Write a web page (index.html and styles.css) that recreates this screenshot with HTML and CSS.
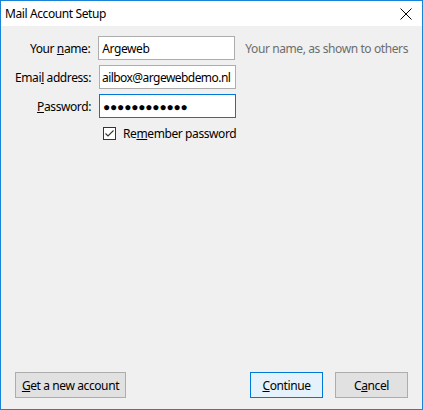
FILE: index.html
```html
<!DOCTYPE html>
<html lang="en">
<head>
  <meta charset="UTF-8">
  <title>Mail Account Setup</title>
  <link rel="stylesheet" href="styles.css">
</head>
<body>
  <div class="window">
    <div class="titlebar">
      <span class="title">Mail Account Setup</span>
      <svg class="close" width="12" height="12" viewBox="0 0 12 12">
        <path d="M0.5 0.5 L11.5 11.5 M11.5 0.5 L0.5 11.5" stroke="#000" stroke-width="1" fill="none"/>
      </svg>
    </div>

    <div class="content">
      <form class="setup-form">
        <div class="row">
          <label for="realname">Your <u>n</u>ame:</label>
          <input type="text" id="realname" value="Argeweb">
          <span class="hint">Your name, as shown to others</span>
        </div>
        <div class="row">
          <label for="email">Emai<u>l</u> address:</label>
          <input type="text" id="email" class="email" value="ailbox@argewebdemo.nl">
        </div>
        <div class="row">
          <label for="password"><u>P</u>assword:</label>
          <input type="text" id="password" class="focused" value="●●●●●●●●●●●●">
        </div>
        <div class="row check-row">
          <span class="checkbox">
            <svg width="13" height="13" viewBox="0 0 13 13">
              <rect x="0.5" y="0.5" width="12" height="12" fill="#fff" stroke="#333"/>
              <path d="M2.5 6.5 L5 9 L10.5 3.5" stroke="#333" stroke-width="1.1" fill="none"/>
            </svg>
          </span>
          <span class="check-label">Re<u>m</u>ember password</span>
        </div>
      </form>

      <div class="buttons">
        <button type="button" class="wide"><u>G</u>et a new account</button>
        <div class="right-buttons">
          <button type="button" class="default"><u>C</u>ontinue</button>
          <button type="button">C<u>a</u>ncel</button>
        </div>
      </div>
    </div>
  </div>
</body>
</html>
```

FILE: styles.css
```css
html, body {
  margin: 0;
  padding: 0;
}

body {
  font-family: "Noto Sans", "Open Sans", sans-serif;
  font-size: 12px;
  letter-spacing: -0.4px;
  color: #000;
  background: #f0f0f0;
}

.window {
  width: 423px;
  height: 410px;
  box-sizing: border-box;
  border: 1px solid #1883d7;
  display: flex;
  flex-direction: column;
  background: #f0f0f0;
}

.titlebar {
  height: 25px;
  background: #fff;
  display: flex;
  align-items: center;
  justify-content: space-between;
  padding: 0 10px 0 4px;
}

.close {
  display: block;
}

.content {
  flex: 1;
  display: flex;
  flex-direction: column;
  justify-content: space-between;
  padding: 10px 14px 11px 14px;
}

.setup-form {
  display: flex;
  flex-direction: column;
  gap: 5px;
}

.row {
  display: flex;
  align-items: center;
  height: 24px;
  white-space: nowrap;
}

.row label {
  width: 76px;
  text-align: right;
  margin-right: 8px;
}

.row input {
  width: 137px;
  height: 24px;
  box-sizing: border-box;
  border: 1px solid #adadad;
  background: #fff;
  padding: 0 3px;
  font-family: inherit;
  font-size: 12px;
  letter-spacing: -0.4px;
  color: #000;
  outline: none;
}

.row input.email {
  padding: 0 1px 0 2px;
  letter-spacing: -0.55px;
}

.row input.focused {
  border-color: #0078d7;
  font-size: 12px;
  letter-spacing: -0.2px;
  padding-left: 3px;
}

.hint {
  margin-left: 10px;
  color: #6d6d6d;
}

.check-row {
  height: 20px;
  padding-left: 88px;
}

.checkbox {
  display: flex;
  margin-right: 7px;
}

.buttons {
  display: flex;
  justify-content: space-between;
  align-items: center;
}

.right-buttons {
  display: flex;
  gap: 12px;
}

button {
  height: 26px;
  width: 73px;
  padding: 0;
  border: 1px solid #adadad;
  background: #e1e1e1;
  font-family: inherit;
  font-size: 12px;
  letter-spacing: -0.4px;
  color: #000;
}

button.wide {
  width: 111px;
}

button.default {
  border-color: #0078d7;
  background: #e5f1fb;
}
```
